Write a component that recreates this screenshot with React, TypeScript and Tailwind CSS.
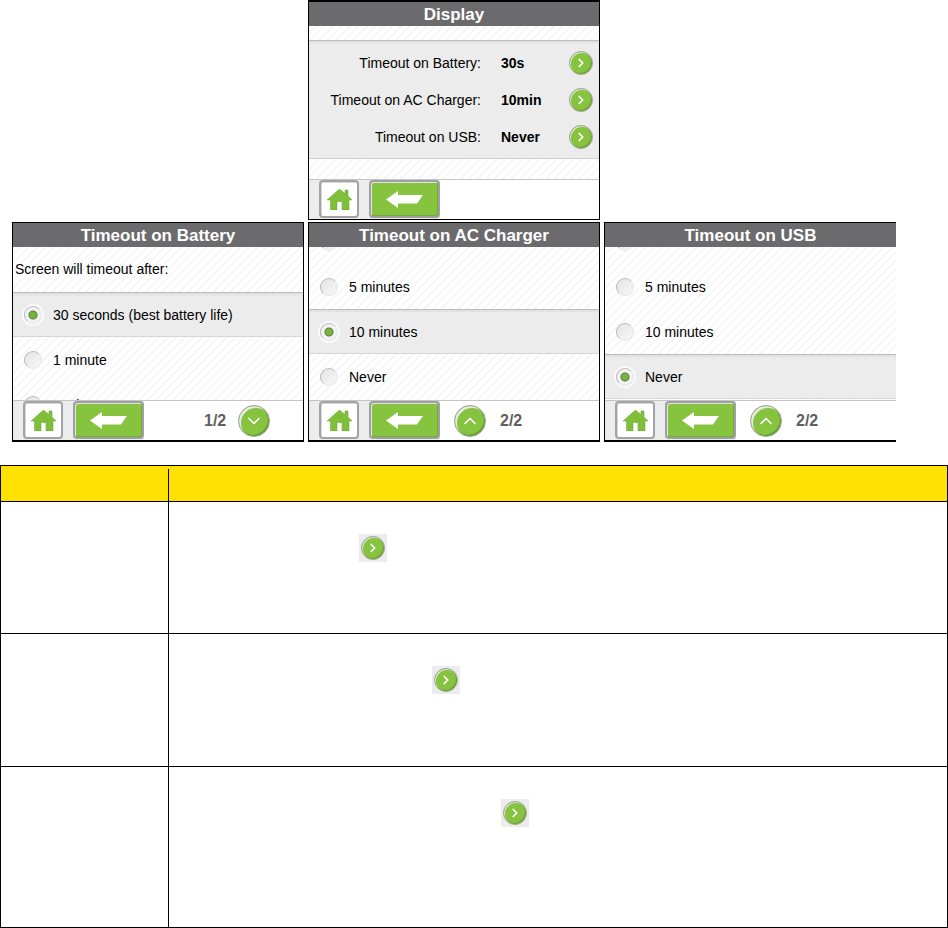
import { type ReactNode } from "react";
import clsx from "clsx";
import { ChevronDown, ChevronRight, ChevronUp } from "lucide-react";

type Timeout = {
  label: string;
  value: string;
};

const timeouts: Timeout[] = [
  { label: "Timeout on Battery:", value: "30s" },
  { label: "Timeout on AC Charger:", value: "10min" },
  { label: "Timeout on USB:", value: "Never" },
];

const stripes =
  "bg-[repeating-linear-gradient(135deg,#fff_0_4px,#f5f5f5_5px_6px)]";

const roundButton =
  "flex shrink-0 items-center justify-center rounded-full bg-[#86c440] text-white border-[#a4aa9f]";

const HomeIcon = () => (
  <svg width="25" height="21" viewBox="0 0 25 21" aria-hidden="true">
    <path
      d="M12.5 0 L18 4.500 V1 H21 V7 L25 11 H22 V21 H15 V12.500 H10 V21 H3.500 V11 H0 Z"
      fill="#7fbf3a"
      stroke="#6aa52f"
      strokeWidth="0.500"
    />
  </svg>
);

const BackIcon = () => (
  <svg width="37" height="17" viewBox="0 0 37 17" aria-hidden="true">
    <path d="M0 8.500 L12 0 V4 H37 L31 12.500 H12 V17 Z" fill="#fff" />
  </svg>
);

const OpenButton = ({ label }: { label: string }) => (
  <button
    aria-label={label}
    className={clsx(
      roundButton,
      "size-6 border shadow-[inset_1px_1px_0_#dfe6d8,inset_-1px_-1px_1px_#6b9c35]"
    )}
  >
    <ChevronRight size={14} strokeWidth={3} />
  </button>
);

const PageButton = ({ dir }: { dir: "up" | "down" }) => (
  <button
    aria-label={dir === "up" ? "Previous page" : "Next page"}
    className={clsx(
      roundButton,
      "size-8 border shadow-[inset_2px_2px_0_#e6e9e3,inset_-1px_-1px_1px_#5f8f2b]"
    )}
  >
    {dir === "up" ? (
      <ChevronUp size={20} strokeWidth={2} />
    ) : (
      <ChevronDown size={20} strokeWidth={2} />
    )}
  </button>
);

const Footer = ({ children }: { children?: ReactNode }) => (
  <div className="flex h-10 shrink-0 border-t border-[#c4c4c4] bg-white">
    <div className="flex w-[131px] shrink-0 gap-2.5 bg-[#ececec] pl-2.5">
      <button
        aria-label="Home"
        className="flex h-[38px] w-10 items-center justify-center rounded-sm border-2 border-[#a3a3a6] bg-white shadow-[inset_1px_1px_0_#d8d8d8]"
      >
        <HomeIcon />
      </button>
      <button
        aria-label="Back"
        className="flex h-[38px] flex-1 items-center justify-center rounded-sm border-2 border-[#a0a0a4] bg-[#86c440] shadow-[inset_1px_1px_0_#e2e4df,inset_-1px_-1px_0_#74ad34]"
      >
        <BackIcon />
      </button>
    </div>
    <div className="flex flex-1 items-center text-base font-bold text-[#606060]">
      {children}
    </div>
  </div>
);

type ScreenProps = {
  title: string;
  className?: string;
  footer?: ReactNode;
  children: ReactNode;
};

const Screen = ({ title, className, footer, children }: ScreenProps) => (
  <section
    className={clsx("flex h-[220px] flex-col border-x border-black", className)}
  >
    <h2 className="h-6 shrink-0 bg-[#6b6a6c] text-center text-[17px] leading-[26px] font-bold text-white">
      {title}
    </h2>
    {children}
    <Footer>{footer}</Footer>
  </section>
);

type OptionProps = {
  name: string;
  label: string;
  checked?: boolean;
};

const Option = ({ name, label, checked }: OptionProps) => (
  <label
    className={clsx(
      "flex h-[45px] shrink-0 items-center gap-[11px] border-y pl-[11px] text-sm",
      checked
        ? "border-t-[#bdbdbd] border-b-[#d6d6d6] bg-[#ececec] shadow-[inset_0_2px_2px_#e0e0e0]"
        : "border-transparent"
    )}
  >
    <input
      type="radio"
      name={name}
      defaultChecked={checked}
      className="size-[18px] appearance-none rounded-full border border-[#b9b9b9] border-r-[#e6e6e6] border-b-[#e6e6e6] bg-[linear-gradient(135deg,#e4e4e4,#f8f8f8)] checked:bg-[radial-gradient(circle,#76b63a_0_3px,#5c7d45_4px,#f2f2f2_5px)] checked:shadow-[0_0_0_2px_#fafafa]"
    />
    {label}
  </label>
);

const OptionList = ({
  end,
  children,
}: {
  end?: boolean;
  children: ReactNode;
}) => (
  <div
    className={clsx(
      "flex min-h-0 flex-1 flex-col overflow-hidden",
      stripes,
      end && "justify-end pb-px"
    )}
  >
    {children}
  </div>
);

const rows = [
  { label: "Open battery timeout", height: "h-[132px]", indent: "pl-[190px]" },
  { label: "Open AC charger timeout", height: "h-[133px]", indent: "pl-[263px]" },
  { label: "Open USB timeout", height: "h-[161px]", indent: "pl-[332px]" },
];

const App = () => {
  return (
    <main className="bg-white font-['Liberation_Sans',Arial,sans-serif] text-black">
      <div className="grid grid-cols-[repeat(3,minmax(0,292px))] gap-x-1 gap-y-0.5 pl-3">
        <Screen title="Display" className="col-start-2 border-t-2 border-b">
          <div className={clsx("flex min-h-0 flex-1 flex-col pt-3.5 pb-5", stripes)}>
            <ul className="flex-1 border-y border-t-[#bdbdbd] border-b-[#cfcfcf] bg-[#ececec] pt-[3px] shadow-[inset_0_2px_2px_#e0e0e0]">
              {timeouts.map((t) => (
                <li
                  key={t.label}
                  className="flex h-[37px] items-center gap-5 pr-1.5 text-sm"
                >
                  <span className="w-[172px] text-right">{t.label}</span>
                  <b className="flex-1">{t.value}</b>
                  <OpenButton label={t.label} />
                </li>
              ))}
            </ul>
          </div>
        </Screen>

        <Screen
          title="Timeout on Battery"
          className="col-start-1 border-t border-b-2"
          footer={
            <div className="flex items-center gap-3 pl-[60px]">
              1/2
              <PageButton dir="down" />
            </div>
          }
        >
          <OptionList>
            <p className="h-[45px] shrink-0 pl-0.5 text-sm leading-[45px]">
              Screen will timeout after:
            </p>
            <Option name="battery" label="30 seconds (best battery life)" checked />
            <Option name="battery" label="1 minute" />
            <Option name="battery" label="2 minutes" />
          </OptionList>
        </Screen>

        <Screen
          title="Timeout on AC Charger"
          className="border-t border-b-2"
          footer={
            <div className="flex items-center gap-3.5 pl-3.5">
              <PageButton dir="up" />
              2/2
            </div>
          }
        >
          <OptionList end>
            <Option name="ac" label="2 minutes" />
            <Option name="ac" label="5 minutes" />
            <Option name="ac" label="10 minutes" checked />
            <Option name="ac" label="Never" />
          </OptionList>
        </Screen>

        <Screen
          title="Timeout on USB"
          className="border-t border-r-0 border-b-2"
          footer={
            <div className="flex items-center gap-3.5 pl-3.5">
              <PageButton dir="up" />
              2/2
            </div>
          }
        >
          <OptionList end>
            <Option name="usb" label="2 minutes" />
            <Option name="usb" label="5 minutes" />
            <Option name="usb" label="10 minutes" />
            <Option name="usb" label="Never" checked />
          </OptionList>
        </Screen>
      </div>

      <table className="mt-[23px] w-full table-fixed border-collapse border border-black">
        <thead>
          <tr className="h-9 border-b border-black bg-[#fee100]">
            <th className="w-[168px] p-0" />
            <th className="p-0 align-bottom">
              <div className="-ml-px h-8 border-l border-black" />
            </th>
          </tr>
        </thead>
        <tbody>
          {rows.map((r) => (
            <tr key={r.label} className={clsx("border-b border-black", r.height)}>
              <td className="border-r border-black p-0" />
              <td className={clsx("p-0 pt-8 align-top", r.indent)}>
                <div className="flex h-7 w-7 items-center justify-center bg-[#ececec]">
                  <OpenButton label={r.label} />
                </div>
              </td>
            </tr>
          ))}
        </tbody>
      </table>
    </main>
  );
};

export default App;
